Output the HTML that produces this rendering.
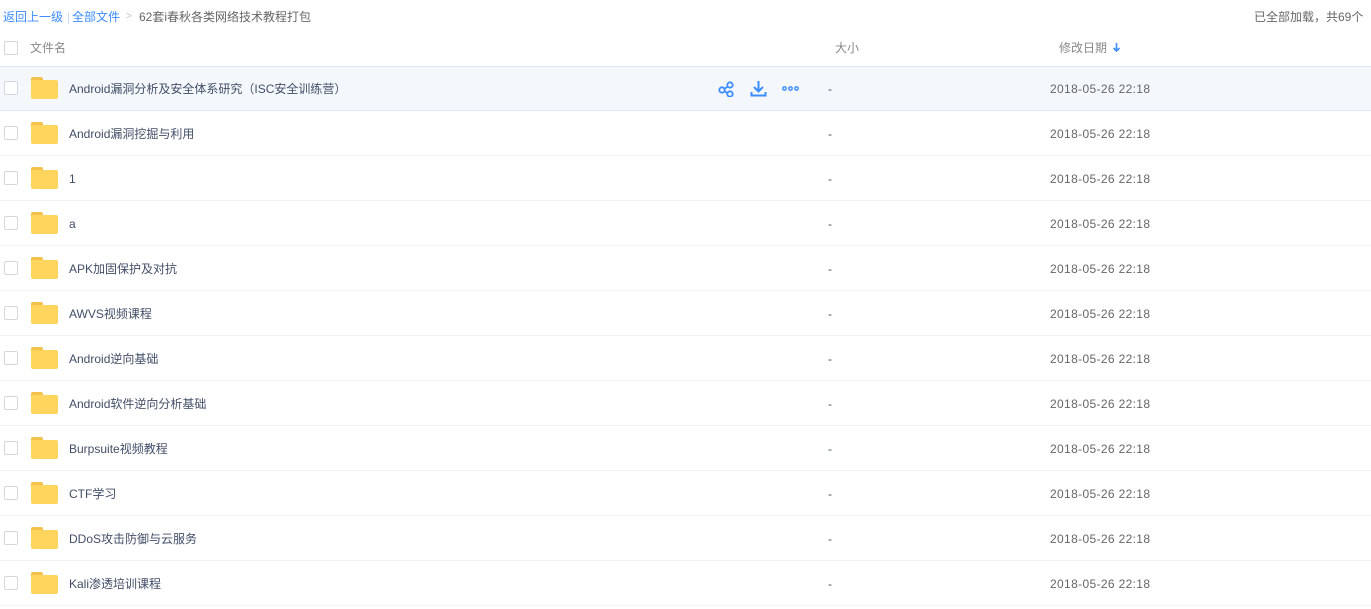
<!DOCTYPE html>
<html><head><meta charset="utf-8"><style>
*{margin:0;padding:0;box-sizing:border-box}
body{width:1371px;height:609px;overflow:hidden;background:#fff;font-family:"Liberation Sans","Noto Sans CJK SC",sans-serif;font-size:12px;color:#424e67;position:relative}
.a{position:absolute;white-space:nowrap;line-height:16px}
.cb{position:absolute;left:4px;width:14px;height:14px;border:1px solid #d4d7de;border-radius:2px;background:#fff}
.row{position:absolute;left:0;width:1371px;height:45px;border-bottom:1px solid #f1f2f5}
.fold{position:absolute;left:31px;width:27px;height:22px}
.fold:before{content:"";position:absolute;left:0;top:0;width:12px;height:5px;background:#f2c24c;border-radius:2px 2px 0 0}
.fold:after{content:"";position:absolute;left:0;top:3px;width:27px;height:19px;background:#ffd55d;border-radius:2px}
.nm{position:absolute;left:69px;line-height:16px;font-size:12px;color:#424e67;white-space:nowrap}
.dash{position:absolute;left:828px;color:#424e67}
.dt{position:absolute;left:1050px;color:#666;letter-spacing:0.35px}
</style></head><body>
<div class="a" style="left:3px;top:9px;color:#3b8cff">返回上一级</div>
<div class="a" style="left:67px;top:9px;color:#c5d8f0">|</div>
<div class="a" style="left:72px;top:9px;color:#3b8cff">全部文件</div>
<div class="a" style="left:126px;top:9px;color:#c0c4cc;font-size:10px">&gt;</div>
<div class="a" style="left:139px;top:9px;color:#666">62套i春秋各类网络技术教程打包</div>
<div class="a" style="left:1254px;top:9px;color:#666">已全部加载，共69个</div>
<div class="cb" style="top:41px"></div>
<div class="a" style="left:30px;top:40px;color:#888">文件名</div>
<div class="a" style="left:835px;top:40px;color:#888">大小</div>
<div class="a" style="left:1059px;top:40px;color:#888">修改日期</div>
<svg class="a" style="left:1112px;top:42px" width="9" height="11" viewBox="0 0 9 11"><path d="M4.5 1v8M1.5 6l3 3 3-3" stroke="#3b8cff" stroke-width="1.6" fill="none"/></svg>
<div style="position:absolute;left:0;top:66px;width:1371px;height:45px;background:#f4f8fd;border-top:1px solid #dbe9f8;border-bottom:1px solid #dbe9f8"></div>
<svg class="a" style="left:718px;top:80px" width="17" height="17" viewBox="0 0 17 17" fill="none" stroke="#3b8cff" stroke-width="1.8"><circle cx="4" cy="10" r="2.7"/><circle cx="12" cy="5" r="2.7"/><circle cx="12" cy="14" r="2.7"/><path d="M6.5 8.7l3-2M6.5 11.3l3 1.7"/></svg>
<svg class="a" style="left:750px;top:80px" width="17" height="17" viewBox="0 0 17 17" fill="none" stroke="#3b8cff" stroke-width="2"><path d="M8.5 1v10M4 7l4.5 4.5L13 7M1.5 12v3.5h14V12"/></svg>
<svg class="a" style="left:782px;top:86px" width="17" height="5" viewBox="0 0 17 5" fill="none" stroke="#3b8cff" stroke-width="1.4"><circle cx="2.5" cy="2.5" r="1.7"/><circle cx="8.5" cy="2.5" r="1.7"/><circle cx="14.5" cy="2.5" r="1.7"/></svg>
<div id="rows"></div>
<script>
var n=["Android漏洞分析及安全体系研究（ISC安全训练营）","Android漏洞挖掘与利用","1","a","APK加固保护及对抗","AWVS视频课程","Android逆向基础","Android软件逆向分析基础","Burpsuite视频教程","CTF学习","DDoS攻击防御与云服务","Kali渗透培训课程"];
var h="";
for(var i=0;i<n.length;i++){var c=88+45*i;
if(i>0)h+='<div class="row" style="top:'+(c-22)+'px"></div>';
h+='<div class="cb" style="top:'+(c-7)+'px"></div><div class="fold" style="top:'+(c-11)+'px"></div><div class="nm" style="top:'+(c-7)+'px">'+n[i]+'</div><div class="a dash" style="top:'+(c-7)+'px">-</div><div class="a dt" style="top:'+(c-7)+'px">2018-05-26 22:18</div>';}
document.getElementById("rows").innerHTML=h;
</script>
</body></html>
